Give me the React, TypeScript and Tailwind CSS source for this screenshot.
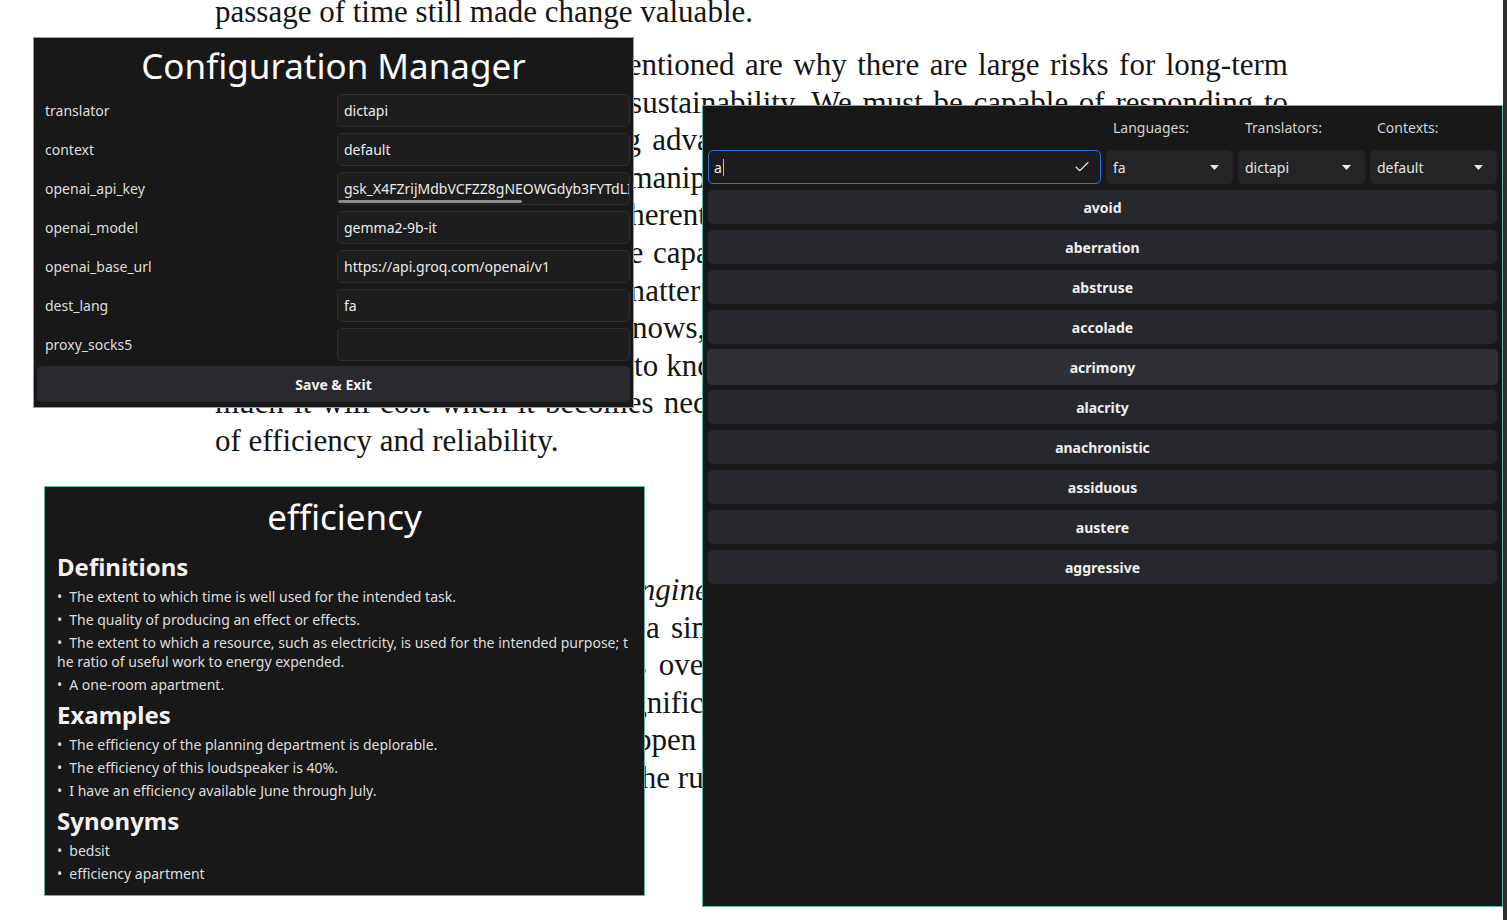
import React from "react";
import { Check } from "lucide-react";

const configRows: [string, string][] = [
  ["translator", "dictapi"],
  ["context", "default"],
  ["openai_api_key", "gsk_X4FZrijMdbVCFZZ8gNEOWGdyb3FYTdLIqW8mZk2r"],
  ["openai_model", "gemma2-9b-it"],
  ["openai_base_url", "https://api.groq.com/openai/v1"],
  ["dest_lang", "fa"],
  ["proxy_socks5", ""],
];

const words = [
  "avoid",
  "aberration",
  "abstruse",
  "accolade",
  "acrimony",
  "alacrity",
  "anachronistic",
  "assiduous",
  "austere",
  "aggressive",
];

const para2 = [
  "All of these factors which we mentioned are why there are large risks for long-term",
  "codebase health and our overall sustainability. We must be capable of responding to",
  "changes to tools, and the shifting advantages of new platforms, without a large and",
  "ecosystem, or risky, costly code manipulation by hand. These very risks are real and",
  "for long-lived codebases; it's inherent in the very way that software is built, and",
  "and we can only be safe if we are capable of tracking all of our dependencies and of",
  "updating them as is needed, no matter whether the change comes from inside or out",
  "the source of a change. Nobody knows, in general, which upgrades are pending or due",
  "they would cost; we merely need to know how to do the work, when to do it, and how",
  "much it will cost when it becomes necessary to prioritize that work over other goals",
];

const para3 = [
  "example, a compiler's upgrade is a simple change in theory, yet in practice it needs",
  "work from hundreds of engineers over a multi-year effort, and the need for a plan",
  "is obvious. The efforts are significant, difficult to estimate, and full of risk",
  "no matter how careful we all happen to be. Still, teams need to plan for a change",
];

function Caret() {
  return (
    <svg width="9" height="5" viewBox="0 0 9 5" className="shrink-0">
      <polygon points="0,0 9,0 4.5,5" fill="#e6e6e6" />
    </svg>
  );
}

function Select({ value }: { value: string }) {
  return (
    <div className="flex h-[34px] items-center justify-between rounded-[5px] bg-[#242427] pl-[7px] pr-[14px] text-[14px] text-[#e6e6e6]">
      <span>{value}</span>
      <Caret />
    </div>
  );
}

function Bullet({ children }: { children: React.ReactNode }) {
  return (
    <li className="py-[2px]">
      <span className="mr-[7px]">•</span>
      {children}
    </li>
  );
}

export default function App() {
  return (
    <div className="relative h-[920px] w-[1507px] overflow-hidden bg-white">
      {/* background document */}
      <div className="ml-[215px] -mt-[7px] w-[1073px] font-['Liberation_Serif',serif] text-[31px] leading-[37.6px] text-[#151515]">
        <div>passage of time still made change valuable.</div>
        <div className="mt-[15.4px]">
          {para2.map((l, i) => (
            <div key={i} className="whitespace-nowrap text-justify [text-align-last:justify]">
              {l}
            </div>
          ))}
          <div>of efficiency and reliability.</div>
        </div>
        <div className="mt-[111.4px]">
          <div className="whitespace-nowrap text-justify [text-align-last:justify]">
            This is the essence of <i>software engineering</i>, as opposed to mere programming. For
          </div>
          {para3.map((l, i) => (
            <div key={i} className="whitespace-nowrap text-justify [text-align-last:justify]">
              {l}
            </div>
          ))}
          <div>anyway, since over the long term the running cost dominates.</div>
        </div>
      </div>

      {/* page scrollbar strip */}
      <div className="absolute right-0 top-0 h-full w-[4px] bg-[#2f2f2f]" />

      {/* Configuration Manager window */}
      <div className="absolute left-[33px] top-[37px] flex h-[371px] w-[601px] flex-col border border-[#63b3a8] bg-[#181818] p-[3px] font-['Noto_Sans',sans-serif] text-[#ececec]">
        <div className="h-[47px] text-center text-[35px] font-normal leading-[49px] text-white">
          Configuration Manager
        </div>
        <div className="mt-[6px] flex flex-col gap-[6px]">
          {configRows.map(([k, v]) => (
            <div key={k} className="grid grid-cols-[1fr_1fr] items-center gap-x-[7px]">
              <div className="pl-[8px] text-[14px] text-[#dedede]">{k}</div>
              <div className="relative flex h-[33px] items-center overflow-hidden whitespace-nowrap rounded-[5px] border border-[#2e2e2e] bg-[#1d1d1d] pl-[6px] text-[14px] text-[#ececec]">
                {v}
                {k === "openai_api_key" && (
                  <div className="absolute bottom-[1px] left-0 h-[3px] w-[184px] rounded-full bg-[#8c8c8c]" />
                )}
              </div>
            </div>
          ))}
        </div>
        <div className="mt-[5px] flex h-[36px] items-center justify-center rounded-[5px] bg-[#2a2a2e] text-[14px] font-bold text-[#f0f0f0]">
          Save &amp; Exit
        </div>
      </div>

      {/* efficiency window */}
      <div className="absolute left-[44px] top-[486px] h-[410px] w-[601px] border border-[#63b3a8] bg-[#181818] px-[12px] pt-[3px] font-['Noto_Sans',sans-serif] text-[#dedede]">
        <div className="h-[52px] text-center text-[35px] font-normal leading-[54px] text-white">
          efficiency
        </div>
        <div className="mt-[9px] text-[24px] font-bold leading-[32px] text-[#f2f2f2]">Definitions</div>
        <ul className="mt-[2px] text-[14px] leading-[19px]">
          <Bullet>The extent to which time is well used for the intended task.</Bullet>
          <Bullet>The quality of producing an effect or effects.</Bullet>
          <Bullet>
            The extent to which a resource, such as electricity, is used for the intended purpose; t
            <br />
            he ratio of useful work to energy expended.
          </Bullet>
          <Bullet>A one-room apartment.</Bullet>
        </ul>
        <div className="mt-[3px] text-[24px] font-bold leading-[32px] text-[#f2f2f2]">Examples</div>
        <ul className="mt-[2px] text-[14px] leading-[19px]">
          <Bullet>The efficiency of the planning department is deplorable.</Bullet>
          <Bullet>The efficiency of this loudspeaker is 40%.</Bullet>
          <Bullet>I have an efficiency available June through July.</Bullet>
        </ul>
        <div className="mt-[3px] text-[24px] font-bold leading-[32px] text-[#f2f2f2]">Synonyms</div>
        <ul className="mt-[2px] text-[14px] leading-[19px]">
          <Bullet>bedsit</Bullet>
          <Bullet>efficiency apartment</Bullet>
        </ul>
      </div>

      {/* dictionary search window */}
      <div className="absolute left-[702px] top-[105px] h-[802px] w-[801px] border border-[#63b3a8] bg-[#181818] px-[5px] pt-[12px] font-['Noto_Sans',sans-serif] text-[#e6e6e6]">
        <div className="grid grid-cols-[1fr_127px_127px_127px] gap-x-[5px] text-[14px] leading-[20px] text-[#d2d2d2]">
          <div />
          <div className="pl-[7px]">Languages:</div>
          <div className="pl-[7px]">Translators:</div>
          <div className="pl-[7px]">Contexts:</div>
        </div>
        <div className="mt-[12px] grid grid-cols-[1fr_127px_127px_127px] gap-x-[5px]">
          <div className="flex h-[34px] items-center rounded-[5px] border border-[#2f6fd8] bg-[#1c1c1e] pl-[5px] pr-[9px]">
            <span className="text-[14px] text-[#ececec]">a</span>
            <span className="ml-[1px] h-[17px] w-px bg-[#9fc0f5]" />
            <Check className="ml-auto" size={18} strokeWidth={1.5} color="#e8e8e8" />
          </div>
          <Select value="fa" />
          <Select value="dictapi" />
          <Select value="default" />
        </div>
        <div className="mt-[6px] flex flex-col gap-[6px]">
          {words.map((w) => (
            <div
              key={w}
              className={
                w === "acrimony"
                  ? "-mx-[1px] -my-[1px] flex h-[36px] items-center justify-center rounded-[5px] bg-[#2f3035] text-[14px] font-bold text-[#f2f2f2]"
                  : "flex h-[34px] items-center justify-center rounded-[5px] bg-[#27282d] text-[14px] font-bold text-[#efefef]"
              }
            >
              {w}
            </div>
          ))}
        </div>
      </div>
    </div>
  );
}
